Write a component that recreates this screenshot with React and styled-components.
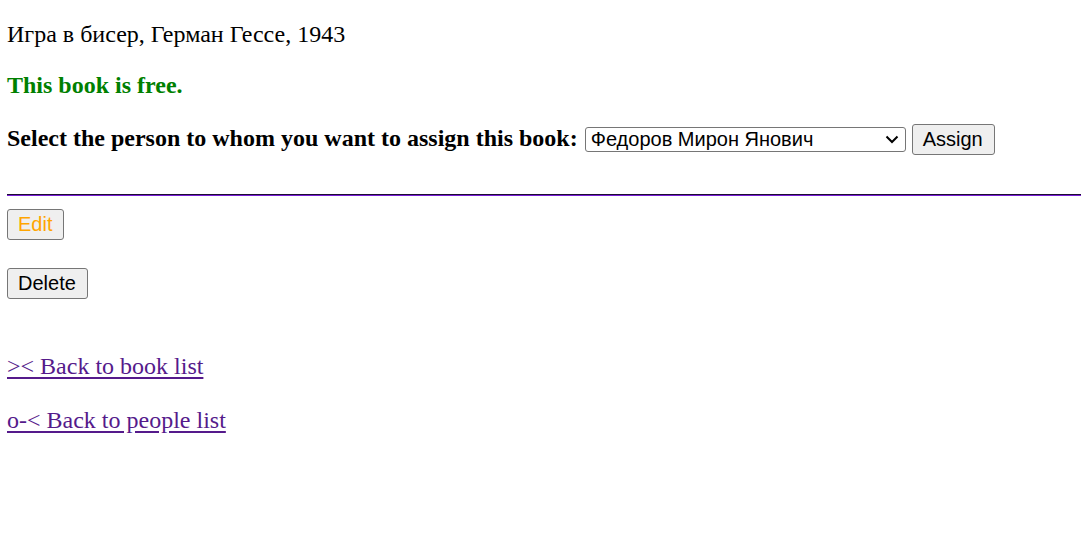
import React, { useState } from "react";
import styled, { createGlobalStyle } from "styled-components";

const GlobalStyle = createGlobalStyle`
  html, body {
    margin: 0;
    padding: 0;
    background: #ffffff;
  }
  body {
    font-family: "Liberation Serif", "Times New Roman", serif;
    font-size: 24px;
    color: #000000;
  }
`;

const Page = styled.div`
  display: flex;
  flex-direction: column;
  align-items: flex-start;
  padding: 21px 0 0 7px;
`;

const Text = styled.p`
  margin: 0 0 ${(props) => props.gap || 0}px 0;
  line-height: 27px;
  font-weight: ${(props) => (props.bold ? 700 : 400)};
  color: ${(props) => props.color || "#000000"};
`;

const AssignRow = styled.form`
  display: flex;
  align-items: center;
  margin: 0;
  height: 31px;
`;

const Label = styled.span`
  font-weight: 700;
  line-height: 27px;
  margin: -2px 7px 0 0;
`;

const SelectWrap = styled.div`
  position: relative;
  margin: 0 6px 0 0;
`;

const PersonSelect = styled.select`
  appearance: none;
  -webkit-appearance: none;
  display: block;
  font-family: "Liberation Sans", Arial, sans-serif;
  font-size: 20px;
  width: 321px;
  height: 25px;
  padding: 0 0 1px 5px;
  border: 1px solid #767676;
  border-radius: 3px;
  background: #ffffff;
  color: #000000;
`;

const Chevron = styled.svg`
  position: absolute;
  right: 7px;
  top: 8px;
  width: 14px;
  height: 9px;
  pointer-events: none;
`;

const Button = styled.button`
  font-family: "Liberation Sans", Arial, sans-serif;
  font-size: 20px;
  line-height: 23px;
  padding: 3px 11px 3px 10px;
  border: 1px solid #767676;
  border-radius: 3px;
  background: #efefef;
  color: ${(props) => props.color || "#000000"};
  margin: ${(props) => props.m || "0"};
  cursor: pointer;
`;

const Rule = styled.hr`
  align-self: stretch;
  margin: 39px 0 13px 0;
  height: 0;
  border: none;
  border-top: 1px solid #1c0b33;
  border-bottom: 1px solid #7a1fd6;
`;

const BackLink = styled.a`
  display: block;
  line-height: 27px;
  color: #551a8b;
  text-decoration: underline;
  text-underline-offset: 3px;
  margin: ${(props) => props.m || "0"};
`;

export default function App() {
  const [person, setPerson] = useState("1");

  return (
    <>
      <GlobalStyle />
      <Page>
        <Text gap={24}>Игра в бисер, Герман Гессе, 1943</Text>
        <Text gap={25} bold color="#008000">
          This book is free.
        </Text>
        <AssignRow onSubmit={(e) => e.preventDefault()}>
          <Label>Select the person to whom you want to assign this book:</Label>
          <SelectWrap>
            <PersonSelect value={person} onChange={(e) => setPerson(e.target.value)}>
              <option value="1">Федоров Мирон Янович</option>
              <option value="2">Иванов Иван Иванович</option>
            </PersonSelect>
            <Chevron viewBox="0 0 14 9">
              <path d="M1.5 1.5 L7 7 L12.5 1.5" fill="none" stroke="#000" strokeWidth="2" />
            </Chevron>
          </SelectWrap>
          <Button type="submit">Assign</Button>
        </AssignRow>
        <Rule />
        <Button color="#ffa500">Edit</Button>
        <Button m="28px 0 0 0">Delete</Button>
        <BackLink href="#" m="54px 0 0 0">&gt;&lt; Back to book list</BackLink>
        <BackLink href="#" m="27px 0 0 0">o-&lt; Back to people list</BackLink>
      </Page>
    </>
  );
}
